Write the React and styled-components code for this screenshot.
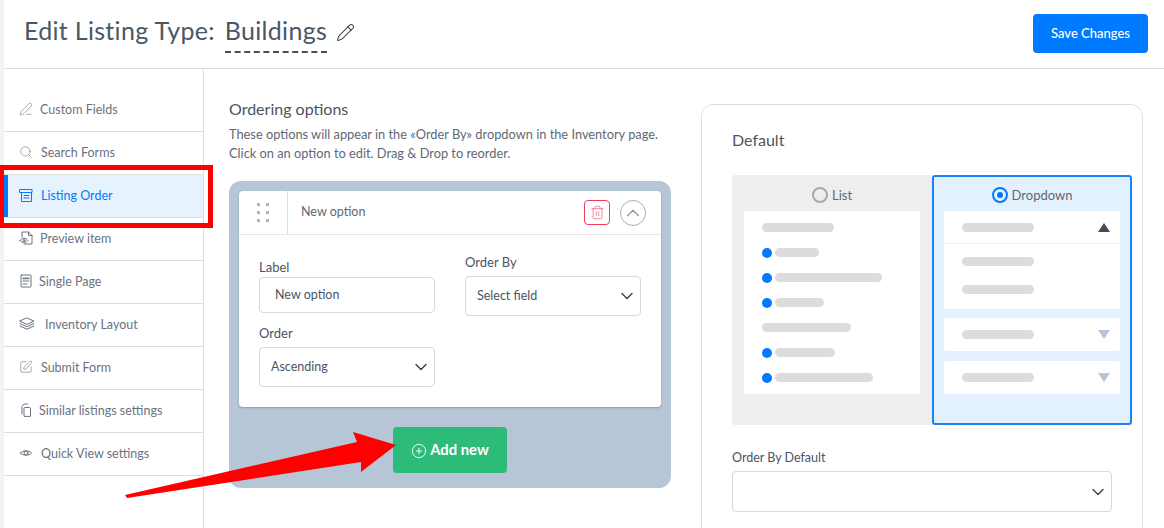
import React from 'react';
import styled, { createGlobalStyle } from 'styled-components';
import { Pencil, PenLine, Search, SquarePen, Trash2, ChevronUp, ChevronDown, PlusCircle } from 'lucide-react';

const GlobalStyle = createGlobalStyle`
  html, body {
    margin: 0;
    padding: 0;
    background: #fff;
    overflow: hidden;
  }
  * { box-sizing: border-box; }
`;

const Page = styled.div`
  position: relative;
  width: 1164px;
  height: 528px;
  overflow: hidden;
  padding-left: 4px;
  background: #f3f3f3;
  color: #4b5563;
  font-family: "Lato", "Noto Sans", sans-serif;
`;

const Header = styled.header`
  height: 69px;
  background: #fff;
  border-bottom: 1px solid #dedede;
  display: flex;
  align-items: flex-start;
  justify-content: space-between;
  padding: 13px 16px 0 20px;
`;

const TitleRow = styled.div`
  display: flex;
  align-items: flex-start;
  font-size: 25px;
  line-height: 34px;
  letter-spacing: 0.3px;
  color: #4a5866;
`;

const TypeName = styled.span`
  margin-left: 10px;
  padding-bottom: 4px;
  border-bottom: 2px dashed #44505e;
`;

const EditIcon = styled.span`
  display: flex;
  margin: 10px 0 0 9px;
  color: #3c4753;
`;

const SaveButton = styled.button`
  width: 115px;
  height: 39px;
  margin-top: 1px;
  border: 0;
  border-radius: 4px;
  padding: 0 0 1px;
  background: #007bff;
  color: #fff;
  font: 500 13px "Lato", sans-serif;
`;

const Body = styled.div`
  display: flex;
  height: 459px;
  background: #fff;
`;

const Sidebar = styled.nav`
  width: 200px;
  flex: none;
  border-right: 1px solid #dedede;
  padding-top: 20px;
`;

const NavItem = styled.div`
  height: 43px;
  display: flex;
  align-items: center;
  gap: ${p => p.$gap}px;
  padding: 0 0 2px 15px;
  font-size: 12.5px;
  color: ${p => (p.$active ? '#007bff' : '#6b7280')};
  background: ${p => (p.$active ? '#e6f2fd' : 'transparent')};
  border-bottom: 1px solid #dedede;
  box-shadow: ${p => (p.$active ? 'inset 4px 0 0 #007bff' : 'none')};

  svg { flex: none; }
`;

const Glyph = styled.svg`
  fill: none;
  stroke: currentColor;
  stroke-width: 1;
  stroke-linecap: round;
  stroke-linejoin: round;
`;

const ListingIcon = () => (
  <Glyph width="14" height="14" viewBox="0 0 14 14">
    <path d="M1 1.500h12v3H1zM2.500 4.500v9h10v-9M5 7.500h5M5 10h5" />
  </Glyph>
);

const PreviewIcon = () => (
  <Glyph width="14" height="14" viewBox="0 0 14 14">
    <path d="M3 6V1h6.500L13 4.500V13H5M9.500 1v3.500H13" />
    <path d="M1 9.500c2-3 6-3 8 0-2 2.600-6 2.600-8 0z" />
    <circle cx="5" cy="9.500" r="1" />
  </Glyph>
);

const PageIcon = () => (
  <Glyph width="14" height="14" viewBox="0 0 14 14">
    <rect x="2" y="1" width="10" height="12" rx="0.5" />
    <path d="M4 4h6M4 4.800h6M4 7h6M4 10h4" />
  </Glyph>
);

const LayersIcon = () => (
  <Glyph width="16" height="14" viewBox="0 0 16 14">
    <path d="M8 1l7 3.200-7 3.200-7-3.200z" />
    <path d="M1 6.600l7 3.200 7-3.200M1 9l7 3.200L15 9" />
  </Glyph>
);

const SimilarIcon = () => (
  <Glyph width="14" height="14" viewBox="0 0 14 14">
    <path d="M3 11V3.500L5 1h3.500" />
    <path d="M5 13V5.500a1 1 0 0 1 1-1h4.500a1 1 0 0 1 1 1V13z" />
  </Glyph>
);

const QuickIcon = () => (
  <Glyph width="14" height="14" viewBox="0 0 14 14">
    <path d="M1.500 7c2.500-3 8.500-3 11 0-2.500 3-8.500 3-11 0z" />
    <circle cx="7" cy="7" r="2" />
  </Glyph>
);

const PenIcon = () => <PenLine size={14} strokeWidth={1} />;
const SearchIcon = () => <Search size={14} strokeWidth={1} />;
const SubmitIcon = () => <SquarePen size={14} strokeWidth={1} />;

const Main = styled.main`
  flex: 1;
  display: flex;
  padding: 30px 0 0 25px;
  gap: 30px;
`;

const Column = styled.section`
  width: 442px;
  flex: none;
`;

const SectionTitle = styled.h2`
  margin: 0;
  font-size: 16px;
  line-height: 20px;
  font-weight: 400;
  color: #4b5563;
`;

const Help = styled.p`
  margin: 6px 0 0;
  font-size: 12.8px;
  line-height: 19px;
  color: #5f6875;
`;

const Board = styled.div`
  margin-top: 18px;
  height: 307px;
  padding: 10px;
  background: #b6c6d6;
  border-radius: 12px;
`;

const OptionCard = styled.div`
  height: 216px;
  background: #fff;
  border-radius: 4px;
  box-shadow: 0 1px 2px rgba(60, 70, 90, 0.35);
`;

const OptionHeader = styled.div`
  height: 44px;
  display: flex;
  align-items: center;
  border-bottom: 1px solid #e6e6e6;
`;

const DragHandle = styled.div`
  width: 49px;
  height: 43px;
  flex: none;
  border-right: 1px solid #e0e0e0;
  display: grid;
  grid-template-columns: repeat(2, 3px);
  grid-auto-rows: 3px;
  gap: 5px 6px;
  align-content: center;
  justify-content: center;
`;

const Dot = styled.i`
  background: #b5b5b5;
`;

const OptionName = styled.span`
  margin-left: 13px;
  font-size: 12.5px;
  color: #5f6875;
  padding-bottom: 2px;
`;

const HeaderActions = styled.div`
  margin-left: auto;
  padding-right: 15px;
  display: flex;
  align-items: center;
  gap: 10px;
`;

const DeleteButton = styled.span`
  width: 26px;
  height: 25px;
  display: flex;
  align-items: center;
  justify-content: center;
  border: 1px solid #f4385f;
  border-radius: 4px;
  color: #f4587a;
`;

const CollapseButton = styled.span`
  width: 26px;
  height: 26px;
  display: flex;
  align-items: center;
  justify-content: center;
  border: 1px solid #a9aeb5;
  border-radius: 50%;
  color: #8c929a;
`;

const FormGrid = styled.div`
  display: flex;
  gap: 30px;
  padding: 0 20px;
`;

const FormColumn = styled.div`
  width: 176px;
  padding-top: ${p => p.$top}px;
`;

const FieldLabel = styled.div`
  font-size: 13px;
  line-height: 16px;
  color: #4b5563;
  margin-top: ${p => p.$top || 0}px;
  margin-bottom: ${p => p.$bottom}px;
`;

const Control = styled.div`
  width: ${p => p.$width || 176}px;
  height: ${p => p.$height}px;
  border: 1px solid #d9d9d9;
  border-radius: 4px;
  background: #fff;
  display: flex;
  align-items: center;
  justify-content: space-between;
  padding: 0 3px 2px ${p => p.$left || 11}px;
  font-size: 12.5px;
  color: #4b5563;

  svg { flex: none; margin-top: 2px; color: #444; }
`;

const AddRow = styled.div`
  display: flex;
  justify-content: center;
  padding-top: 20px;
`;

const AddButton = styled.button`
  width: 114px;
  height: 46px;
  border: 0;
  border-radius: 4px;
  background: #2dbb7a;
  color: #fff;
  display: flex;
  align-items: center;
  justify-content: center;
  gap: 3px;
  font: 700 14.8px "Lato", sans-serif;
  padding: 0 0 2px;

  svg { margin-top: 3px; }
`;

const DefaultCard = styled.section`
  width: 442px;
  height: 460px;
  flex: none;
  margin: 5px 0 0 0;
  border: 1px solid #dedede;
  border-radius: 12px;
  padding: 25px 9px 0 30px;
`;

const DefaultTitle = styled.h3`
  margin: 0;
  font-size: 16px;
  line-height: 20px;
  font-weight: 400;
  color: #4b5563;
`;

const Chooser = styled.div`
  display: flex;
  margin-top: 25px;
`;

const Choice = styled.div`
  width: 200px;
  height: 250px;
  flex: none;
  border-radius: 3px;
  padding: ${p => (p.$selected ? '5px 10px' : '7px 12px')};
  background: ${p => (p.$selected ? '#e3f1fe' : '#eeeeee')};
  border: ${p => (p.$selected ? '2px solid #1a82f7' : '0')};
`;

const ChoiceTitle = styled.div`
  height: 26px;
  display: flex;
  align-items: center;
  justify-content: center;
  gap: 4px;
  font-size: 13px;
  color: #5f6875;
`;

const Radio = styled.span`
  width: 16px;
  height: 16px;
  border-radius: 50%;
  border: 2px solid ${p => (p.$on ? '#007bff' : '#a9a9a9')};
  display: flex;
  align-items: center;
  justify-content: center;

  &::after {
    content: '';
    width: 6px;
    height: 6px;
    border-radius: 50%;
    background: ${p => (p.$on ? '#007bff' : 'transparent')};
  }
`;

const WhiteBox = styled.div`
  background: #fff;
  border-radius: 3px;
  margin-top: ${p => p.$top || 0}px;
`;

const ListBox = styled(WhiteBox)`
  height: 183px;
  margin-top: 3px;
  padding: 12px 18px;
  display: flex;
  flex-direction: column;
  gap: 16px;
`;

const ListRow = styled.div`
  height: 9px;
  display: flex;
  align-items: center;
  gap: 3px;
`;

const BlueDot = styled.span`
  width: 10px;
  height: 10px;
  border-radius: 50%;
  background: #007bff;
`;

const Bar = styled.span`
  display: block;
  height: 9px;
  width: ${p => p.$w}px;
  border-radius: 5px;
  background: #dcdcdc;
`;

const DropRow = styled.div`
  height: 33px;
  display: flex;
  align-items: center;
  justify-content: space-between;
  padding: 0 10px 0 18px;
  border-bottom: ${p => (p.$line ? '1px solid #f0f0f0' : '0')};
`;

const DropBody = styled.div`
  height: 65px;
  padding: 13px 18px 0;
  display: flex;
  flex-direction: column;
  gap: 19px;
`;

const Triangle = styled.span`
  width: 0;
  height: 0;
  border-left: 6.5px solid transparent;
  border-right: 6.5px solid transparent;
  border-bottom: ${p => (p.$up ? '9px solid #3f4c5a' : '0')};
  border-top: ${p => (p.$up ? '0' : '9px solid #b6c6d6')};
`;

const DefaultLabel = styled(FieldLabel)`
  font-size: 12.5px;
  margin-top: 25px;
  margin-bottom: 5px;
`;

const Highlight = styled.div`
  position: absolute;
  left: 0;
  top: 165px;
  width: 213px;
  height: 63px;
  border: 5px solid #ff0000;
  border-left-width: 4px;
  pointer-events: none;
`;

const Arrow = styled.svg`
  position: absolute;
  left: 120px;
  top: 425px;
  pointer-events: none;
`;

const navItems = [
  { label: 'Custom Fields', Icon: PenIcon, gap: 7 },
  { label: 'Search Forms', Icon: SearchIcon, gap: 8 },
  { label: 'Listing Order', Icon: ListingIcon, gap: 8, active: true },
  { label: 'Preview item', Icon: PreviewIcon, gap: 7 },
  { label: 'Single Page', Icon: PageIcon, gap: 6 },
  { label: 'Inventory Layout', Icon: LayersIcon, gap: 10 },
  { label: 'Submit Form', Icon: SubmitIcon, gap: 8 },
  { label: 'Similar listings settings', Icon: SimilarIcon, gap: 6 },
  { label: 'Quick View settings', Icon: QuickIcon, gap: 8 },
];

const listRows = [
  { w: 72 },
  { w: 44, dot: true },
  { w: 107, dot: true },
  { w: 49, dot: true },
  { w: 89 },
  { w: 60, dot: true },
  { w: 98, dot: true },
];

export default function App() {
  return (
    <Page>
      <GlobalStyle />
      <Header>
        <TitleRow>
          Edit Listing Type:
          <TypeName>Buildings</TypeName>
          <EditIcon><Pencil size={19} strokeWidth={1.3} /></EditIcon>
        </TitleRow>
        <SaveButton>Save Changes</SaveButton>
      </Header>

      <Body>
        <Sidebar>
          {navItems.map(({ label, Icon, gap, active }) => (
            <NavItem key={label} $active={active} $gap={gap}>
              <Icon />
              {label}
            </NavItem>
          ))}
        </Sidebar>

        <Main>
          <Column>
            <SectionTitle>Ordering options</SectionTitle>
            <Help>
              These options will appear in the «Order By» dropdown in the Inventory page.
              <br />
              Click on an option to edit. Drag &amp; Drop to reorder.
            </Help>
            <Board>
              <OptionCard>
                <OptionHeader>
                  <DragHandle>
                    {[0, 1, 2, 3, 4, 5].map(i => <Dot key={i} />)}
                  </DragHandle>
                  <OptionName>New option</OptionName>
                  <HeaderActions>
                    <DeleteButton><Trash2 size={15} strokeWidth={1.2} /></DeleteButton>
                    <CollapseButton><ChevronUp size={22} strokeWidth={1.2} /></CollapseButton>
                  </HeaderActions>
                </OptionHeader>
                <FormGrid>
                  <FormColumn $top={24}>
                    <FieldLabel $bottom={2}>Label</FieldLabel>
                    <Control $height={36} $left={15}>New option</Control>
                    <FieldLabel $top={12} $bottom={6}>Order</FieldLabel>
                    <Control $height={40}>
                      Ascending
                      <ChevronDown size={20} strokeWidth={1.7} />
                    </Control>
                  </FormColumn>
                  <FormColumn $top={19}>
                    <FieldLabel $bottom={6}>Order By</FieldLabel>
                    <Control $height={40}>
                      Select field
                      <ChevronDown size={20} strokeWidth={1.7} />
                    </Control>
                  </FormColumn>
                </FormGrid>
              </OptionCard>
              <AddRow>
                <AddButton>
                  <PlusCircle size={16} strokeWidth={1.4} />
                  Add new
                </AddButton>
              </AddRow>
            </Board>
          </Column>

          <DefaultCard>
            <DefaultTitle>Default</DefaultTitle>
            <Chooser>
              <Choice>
                <ChoiceTitle>
                  <Radio />
                  List
                </ChoiceTitle>
                <ListBox>
                  {listRows.map(({ w, dot }, i) => (
                    <ListRow key={i}>
                      {dot && <BlueDot />}
                      <Bar $w={w} />
                    </ListRow>
                  ))}
                </ListBox>
              </Choice>
              <Choice $selected>
                <ChoiceTitle>
                  <Radio $on />
                  Dropdown
                </ChoiceTitle>
                <WhiteBox $top={3}>
                  <DropRow $line>
                    <Bar $w={72} />
                    <Triangle $up />
                  </DropRow>
                  <DropBody>
                    <Bar $w={72} />
                    <Bar $w={72} />
                  </DropBody>
                </WhiteBox>
                <WhiteBox $top={9}>
                  <DropRow>
                    <Bar $w={72} />
                    <Triangle />
                  </DropRow>
                </WhiteBox>
                <WhiteBox $top={10}>
                  <DropRow>
                    <Bar $w={72} />
                    <Triangle />
                  </DropRow>
                </WhiteBox>
              </Choice>
            </Chooser>
            <DefaultLabel>Order By Default</DefaultLabel>
            <Control $width={380} $height={41}>
              <span />
              <ChevronDown size={20} strokeWidth={1.7} />
            </Control>
          </DefaultCard>
        </Main>
      </Body>

      <Highlight />
      <Arrow width="290" height="85" viewBox="120 425 290 85">
        <polygon points="125,495 357,442 353,432 396,445 361,472 361,462 127,498" fill="#ff0000" />
      </Arrow>
    </Page>
  );
}
